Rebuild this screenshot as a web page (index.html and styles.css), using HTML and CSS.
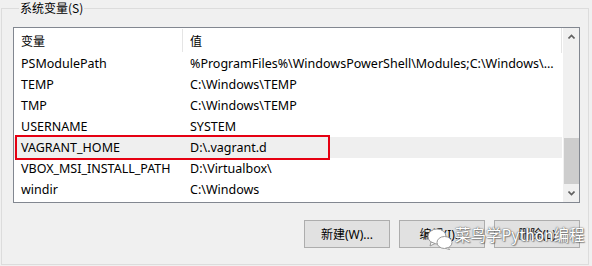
FILE: index.html
```html
<!DOCTYPE html>
<html lang="zh-CN">
<head>
<meta charset="utf-8">
<link rel="stylesheet" href="styles.css">
</head>
<body>
<fieldset class="group">
  <legend class="group-title">系统变量(S)</legend>
  <div class="list">
    <div class="table">
      <div class="head">
        <div class="hcell c1">变量</div>
        <div class="hcell c2">值</div>
      </div>
      <div class="row"><div class="cell c1">PSModulePath</div><div class="cell c2">%ProgramFiles%\WindowsPowerShell\Modules;C:\Windows\...</div></div>
      <div class="row"><div class="cell c1">TEMP</div><div class="cell c2">C:\Windows\TEMP</div></div>
      <div class="row"><div class="cell c1">TMP</div><div class="cell c2">C:\Windows\TEMP</div></div>
      <div class="row"><div class="cell c1">USERNAME</div><div class="cell c2">SYSTEM</div></div>
      <div class="row sel"><div class="cell c1">VAGRANT_HOME</div><div class="cell c2">D:\.vagrant.d</div></div>
      <div class="row"><div class="cell c1">VBOX_MSI_INSTALL_PATH</div><div class="cell c2">D:\Virtualbox\</div></div>
      <div class="row"><div class="cell c1">windir</div><div class="cell c2">C:\Windows</div></div>
    </div>
    <div class="scrollbar">
      <div class="arrow"><svg width="7" height="5" viewBox="0 0 7 5"><path d="M0.5 4.5 L3.5 1.5 L6.5 4.5" fill="none" stroke="#606060" stroke-width="1.6"/></svg></div>
      <div class="track"><div class="thumb"></div></div>
      <div class="arrow"><svg width="7" height="5" viewBox="0 0 7 5"><path d="M0.5 0.5 L3.5 3.5 L6.5 0.5" fill="none" stroke="#606060" stroke-width="1.6"/></svg></div>
    </div>
    <div class="mark"></div>
  </div>
  <div class="buttons">
    <button class="btn">新建(W)...</button>
    <button class="btn">编辑(I)...</button>
    <button class="btn">删除(L)</button>
  </div>
  <div class="watermark">
    <svg class="wx" width="26" height="22" viewBox="0 0 26 22">
      <ellipse cx="10" cy="8.5" rx="9" ry="7.5" fill="#fff" stroke="#9a9a9a" stroke-width="1"/>
      <path d="M4 14 L3 18 L8 15.5 Z" fill="#fff" stroke="#9a9a9a" stroke-width="1"/>
      <ellipse cx="17.5" cy="14.5" rx="7.5" ry="6" fill="#fff" stroke="#9a9a9a" stroke-width="1"/>
      <path d="M21 19.5 L23 22 L18.5 20.3 Z" fill="#fff" stroke="#9a9a9a" stroke-width="0.8"/>
    </svg>
    <span class="wm-text">菜鸟学Python编程</span>
  </div>
</fieldset>
</body>
</html>
```
FILE: styles.css
```css
* { box-sizing: border-box; }
html, body {
  margin: 0;
  padding: 0;
  background: #f0f0f0;
  width: 592px;
  height: 266px;
  overflow: hidden;
}
body {
  font-family: "Noto Sans", "Noto Sans CJK SC", sans-serif;
  font-size: 12.5px;
  color: #000;
}
.group {
  position: relative;
  margin: 0 0 0 1px;
  width: 588px;
  height: 265px;
  border: 1px solid #dcdcdc;
  padding: 11px 8px 0 11px;
  min-width: 0;
}
.group-title {
  padding: 0 1px;
  margin-left: 6px;
  line-height: 16px;
  height: 16px;
  font-family: "Noto Sans CJK SC", sans-serif;
  font-size: 12px;
}
.list {
  position: relative;
  display: flex;
  width: 567px;
  height: 176px;
  border: 1px solid #828790;
  background: #fff;
  overflow: hidden;
}
.table {
  width: 548px;
  flex: none;
}
.head {
  display: flex;
  height: 25px;
  border-right: 1px solid #e5e5e5;
}
.hcell {
  line-height: 25px;
  padding-left: 7px;
  font-family: "Noto Sans CJK SC", sans-serif;
  font-size: 12px;
}
.head .c1 {
  border-right: 1px solid #e5e5e5;
  margin: 1px 0;
  line-height: 23px;
}
.c1 { width: 169px; flex: none; padding-left: 7px; }
.c2 { flex: 1; padding-left: 7px; white-space: nowrap; }
.row {
  display: flex;
  height: 21px;
  line-height: 21px;
  white-space: nowrap;
}
.row.sel { background: #efefef; }
.scrollbar {
  margin-left: 1px;
  width: 17px;
  flex: none;
  display: flex;
  flex-direction: column;
  background: #f0f0f0;
}
.arrow {
  height: 17px;
  display: flex;
  align-items: center;
  justify-content: center;
}
.track {
  flex: 1;
  position: relative;
}
.thumb {
  margin-top: 93px;
  height: 46px;
  margin-left: 1px;
  width: 15px;
  background: #cdcdcd;
}
.mark {
  position: absolute;
  left: 1px;
  top: 107px;
  width: 315px;
  height: 25px;
  border: 2px solid #e60012;
}
.buttons {
  display: flex;
  justify-content: flex-end;
  gap: 9px;
  margin-top: 17px;
}
.btn {
  width: 86px;
  height: 28px;
  margin: 0;
  padding: 0;
  background: #e1e1e1;
  border: 1px solid #adadad;
  border-radius: 0;
  font-family: "Noto Sans", "Noto Sans CJK SC", sans-serif;
  font-size: 12px;
  color: #000;
}
.watermark {
  position: absolute;
  left: 425px;
  top: 208px;
  display: flex;
  align-items: flex-start;
  gap: 2px;
}
.wx { margin-top: 4px; }
.wm-text {
  color: #fff;
  font-family: "Noto Sans CJK SC", sans-serif;
  font-size: 15.5px;
  line-height: 20px;
  text-shadow: 0 0 1px #555, 0 0 2px #777, 1px 1px 1px rgba(0,0,0,0.35);
}
```
